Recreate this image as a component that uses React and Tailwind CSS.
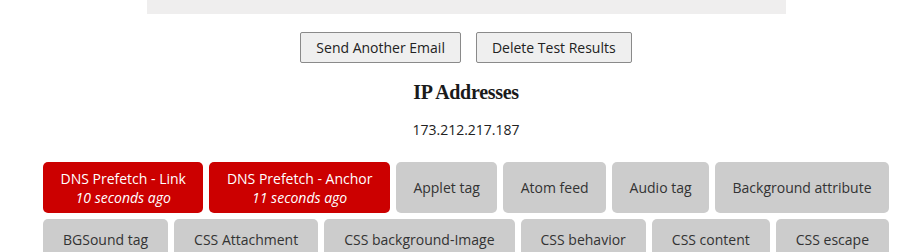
const tags = [
  { label: 'DNS Prefetch - Link', when: '10 seconds ago' },
  { label: 'DNS Prefetch - Anchor', when: '11 seconds ago' },
  { label: 'Applet tag' },
  { label: 'Atom feed' },
  { label: 'Audio tag' },
  { label: 'Background attribute' },
  { label: 'BGSound tag' },
  { label: 'CSS Attachment' },
  { label: 'CSS background-Image' },
  { label: 'CSS behavior' },
  { label: 'CSS content' },
  { label: 'CSS escape' },
]

export default function App() {
  return (
    <div className="w-[914px] h-[252px] overflow-hidden bg-white pl-[43px] pr-[25px] text-[14px] text-[#333] font-['Open_Sans',sans-serif]">
      {/* top panel */}
      <div className="mx-auto w-[639px] h-[14px] bg-[#efeeee]" />

      <div className="mt-[18px] flex justify-center gap-[15px]">
        <button className="h-[31px] px-[15px] bg-[#efefef] border border-[#8a8a8a] rounded-[2px] text-[#222]">
          Send Another Email
        </button>
        <button className="h-[31px] px-[15px] bg-[#efefef] border border-[#8a8a8a] rounded-[2px] text-[#222]">
          Delete Test Results
        </button>
      </div>

      <h2 className="mt-[16px] text-center text-[20px] leading-[26px] font-bold text-[#1a1a1a] tracking-[-0.3px] font-['Liberation_Serif',serif]">
        IP Addresses
      </h2>
      <p className="mt-[15px] text-center leading-[20px] text-[#222]">173.212.217.187</p>

      <div className="mt-[22px] flex flex-wrap gap-[6px]">
        {tags.map((t) =>
          t.when ? (
            <div
              key={t.label}
              className="grow px-[16px] py-[6.5px] rounded-[5px] bg-[#cc0000] text-white text-center leading-[19px]"
            >
              <div>{t.label}</div>
              <div className="italic">{t.when}</div>
            </div>
          ) : (
            <div
              key={t.label}
              className="grow px-[16px] py-[12px] leading-[17.5px] rounded-[5px] bg-[#cccccc] text-[#333] flex items-center justify-center"
            >
              {t.label}
            </div>
          )
        )}
      </div>
    </div>
  )
}
